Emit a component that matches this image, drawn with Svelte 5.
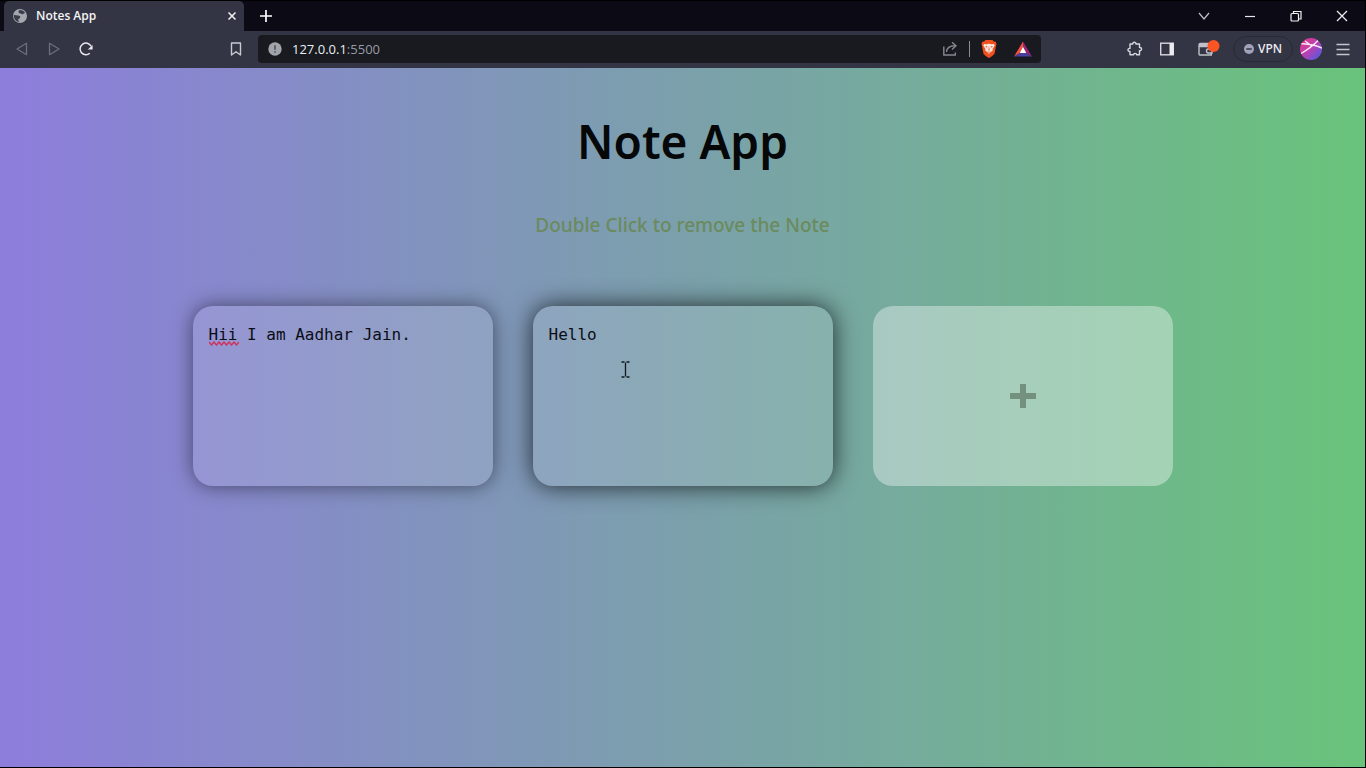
<script>
  let notes = $state([
    { id: 1, text: 'Hii I am Aadhar Jain.', active: false, misspelt: true },
    { id: 2, text: 'Hello', active: true, misspelt: false }
  ]);
  let nextId = 3;

  function addNote() {
    notes.push({ id: nextId++, text: '', active: false, misspelt: false });
  }

  function removeNote(id) {
    notes = notes.filter((note) => note.id !== id);
  }
</script>

<div class="window">
  <header class="titlebar">
    <div class="tab">
      <svg class="globe" width="16" height="16" viewBox="0 0 16 16" aria-hidden="true">
        <circle cx="8" cy="8" r="7" fill="#a6a8b0" />
        <path d="M1.800 7.200C3.500 6.600 4.600 7.800 6.200 7.600c1.800 0 2.600 1 1.800 2.400-.6.800-1.800.6-1.800 1.800 0 .8.800 1.200.6 2.200C3.800 13.500 1.600 10.600 1.800 7.200zM7.500 2c2.200-.2 4.600.800 5.600 3-1.200 0-1.400 1.200-2.600 1.200-1 0-1.200-.8-2-.8-1.200 0-2-.6-2-1.600C6.500 3 7 2.600 7.500 2z" fill="#3b3d49" />
      </svg>
      <span class="tab-title">Notes App</span>
      <button class="plain close" aria-label="Close tab">
        <svg width="10" height="10" viewBox="0 0 10 10"><path d="M1.500 1.500l7 7m0-7l-7 7" stroke="#f0f0f3" stroke-width="1.500" /></svg>
      </button>
    </div>
    <button class="plain new-tab" aria-label="New tab">
      <svg width="14" height="14" viewBox="0 0 14 14"><path d="M7 1v12M1 7h12" stroke="#fff" stroke-width="1.700" /></svg>
    </button>
    <div class="controls">
      <button class="plain control" aria-label="Search tabs">
        <svg width="12" height="12" viewBox="0 0 12 12"><path d="M1 3l5 6 5-6" fill="none" stroke="#c0c0c8" stroke-width="1.200" /></svg>
      </button>
      <button class="plain control" aria-label="Minimize">
        <svg width="12" height="12" viewBox="0 0 12 12"><path d="M1 6.500h10" stroke="#e8e8ec" stroke-width="1.200" /></svg>
      </button>
      <button class="plain control" aria-label="Restore">
        <svg width="12" height="12" viewBox="0 0 12 12" fill="none" stroke="#f0f0f3" stroke-width="1.200"><rect x="1" y="3.500" width="7.500" height="7.500" rx="1" /><path d="M3.500 3.500V1.500h7.500v7.500H8.500" /></svg>
      </button>
      <button class="plain control" aria-label="Close window">
        <svg width="12" height="12" viewBox="0 0 12 12"><path d="M1 1l10 10M11 1L1 11" stroke="#f0f0f3" stroke-width="1.200" /></svg>
      </button>
    </div>
  </header>

  <nav class="toolbar" aria-label="Browser toolbar">
    <div class="history">
      <button class="plain icon" aria-label="Back">
        <svg width="16" height="16" viewBox="0 0 16 16"><path d="M12.500 2.300v11.400L3 8z" fill="none" stroke="#6c6e7a" stroke-width="1.300" stroke-linejoin="round" /></svg>
      </button>
      <button class="plain icon" aria-label="Forward">
        <svg width="16" height="16" viewBox="0 0 16 16"><path d="M3.500 2.300v11.400L13 8z" fill="none" stroke="#6c6e7a" stroke-width="1.300" stroke-linejoin="round" /></svg>
      </button>
      <button class="plain icon" aria-label="Reload">
        <svg width="16" height="16" viewBox="0 0 16 16"><path d="M11.800 12.200A5.800 5.800 0 1 1 13 5.200" fill="none" stroke="#e8e8ec" stroke-width="1.500" /><path d="M14.600 4v4.500h-4.800z" fill="#e8e8ec" /></svg>
      </button>
    </div>
    <button class="plain icon bookmark" aria-label="Bookmark this page">
      <svg width="16" height="16" viewBox="0 0 16 16"><path d="M3.500 2h9v12L8 10.800 3.500 14z" fill="none" stroke="#c9cad1" stroke-width="1.400" stroke-linejoin="round" /></svg>
    </button>
    <div class="address">
      <svg width="14" height="14" viewBox="0 0 14 14" aria-hidden="true"><circle cx="7" cy="7" r="6.700" fill="#a2a4ab" /><path d="M7 3.200v4.600M7 9.200v1.600" stroke="#4b4d55" stroke-width="1.500" /></svg>
      <span class="url">127.0.0.1<span class="port">:5500</span></span>
      <button class="plain icon share" aria-label="Share">
        <svg width="16" height="16" viewBox="0 0 16 16" fill="none" stroke="#85878f" stroke-width="1.400"><path d="M1.800 5.500v8.500h11.500v-2.500M4.500 11c.2-4 3-6.200 8.500-6.200" /><path d="M10 1.200l4 3.600-4 3.700" /></svg>
      </button>
      <span class="divider"></span>
      <button class="plain icon shield" aria-label="Brave Shields">
        <svg width="18" height="18" viewBox="0 0 18 18"><path d="M5.500 0h7l1.300 1.500 1.900.2.900 2.600-.6 1.500-1.300 7.100c-.3 1.200-1.700 2.500-5.700 5.100-4-2.600-5.400-3.900-5.700-5.100L2 5.800l-.6-1.500.9-2.600 1.900-.2z" fill="#f0501f" /><path d="M4 4l2.700.3L9 3.700l2.300.6L14 4l.7 1.600-2.200 3.400.3 1.500-2 1.500L9 13.900 7.200 12l-2-1.500.3-1.500-2.200-3.400z" fill="#f7e6dc" /><path d="M5 6l2.500.5-.7 1.300zM13 6l-2.500.5.7 1.300zM9 6l.6 4L9 11l-.6-1zM7 11.200l2 .9 2-.9-2 1.700z" fill="#dc5430" /></svg>
      </button>
      <button class="plain icon" aria-label="Brave Rewards">
        <svg width="18" height="16" viewBox="0 0 18 16"><path d="M9 .500L0 15.500l6-3.500L9 6z" fill="#f4513b" /><path d="M9 .500l9 15L12 12 9 6z" fill="#9c2277" /><path d="M0 15.500h18L12 12H6z" fill="#493f9f" /><path d="M9 5.800L12.200 12H5.800z" fill="#fff" /></svg>
      </button>
    </div>
    <div class="extensions">
      <button class="plain icon" aria-label="Extensions">
        <svg width="16" height="16" viewBox="0 0 16 16"><path d="M3 3h2.800c-.5-2.300 3.600-2.300 3.100 0h3.600v3.500c2.700-.4 2.700 3.600 0 3.200v4.100H9.600c.2-1.900-3.200-1.900-3 0H3V10.500c-2.700.3-2.700-3.400 0-3.100z" fill="none" stroke="#d7d8de" stroke-width="1.400" stroke-linejoin="round" /></svg>
      </button>
      <button class="plain icon" aria-label="Sidebar">
        <svg width="16" height="16" viewBox="0 0 16 16"><rect x="1.700" y="2.200" width="12.600" height="11.600" fill="none" stroke="#d7d8de" stroke-width="1.400" /><path d="M10.500 2h4v12h-4z" fill="#ececf0" /></svg>
      </button>
      <button class="plain wallet" aria-label="Wallet">
        <svg width="24" height="18" viewBox="0 0 24 18"><path d="M2 5v9.300c0 .5.200.7.700.7h11.600V6.500H2M2 5c0-1 .4-1.500 1.500-1.500h9v3" fill="none" stroke="#bfc0c8" stroke-width="1.400" /><path d="M2 4h10v2H2z" fill="#bfc0c8" /><path d="M15 9h-4c-2 0-2 4 0 4h4z" fill="#343645" stroke="#bfc0c8" stroke-width="1.400" /><circle cx="16.500" cy="6" r="6" fill="#fc5422" /></svg>
      </button>
    </div>
    <button class="vpn">
      <svg width="10" height="10" viewBox="0 0 10 10" aria-hidden="true"><circle cx="5" cy="5" r="5" fill="#a0a3ba" /><path d="M2.300 5h5.400" stroke="#343645" stroke-width="1.500" /></svg>
      <span>VPN</span>
    </button>
    <button class="plain profile" aria-label="Profile">
      <svg width="22" height="22" viewBox="0 0 22 22">
        <defs>
          <linearGradient id="avatar" x1="0" y1="0" x2="1" y2="1"><stop offset=".1" stop-color="#e0398c" /><stop offset=".5" stop-color="#b83fb4" /><stop offset="1" stop-color="#3f62e8" /></linearGradient>
          <clipPath id="avatar-disc"><circle cx="11" cy="11" r="11" /></clipPath>
        </defs>
        <g clip-path="url(#avatar-disc)"><path d="M0 0h22v22H0z" fill="url(#avatar)" /><path d="M0 5.500c8 .2 16 2 22 4.500M1 15.500C7 12 13 8 18 2.500M5 3c3 2 5 3.500 7 5.500" fill="none" stroke="#fbeaf6" stroke-width="1.400" /></g>
      </svg>
    </button>
    <button class="plain icon menu" aria-label="Menu">
      <svg width="16" height="16" viewBox="0 0 16 16"><path d="M1.500 3.500h13M1.500 8.500h13M1.500 13.500h13" stroke="#c4c5cc" stroke-width="1.500" /></svg>
    </button>
  </nav>

  <main>
    <h1>Note App</h1>
    <p>Double Click to remove the Note</p>
    <div class="notes">
      {#each notes as note (note.id)}
        <div class="note" class:active={note.active}>
          <textarea
            aria-label="Note {note.id}"
            spellcheck="false"
            bind:value={note.text}
            ondblclick={() => removeNote(note.id)}
          ></textarea>
          {#if note.misspelt}
            <svg class="squiggle" width="30" height="5" viewBox="0 0 30 5" aria-hidden="true"><path d="M0 1l2.500 3L5 1l2.500 3L10 1l2.500 3L15 1l2.500 3L20 1l2.500 3L25 1l2.500 3L30 1" fill="none" stroke="#d52c55" stroke-width="1.300" /></svg>
          {/if}
          {#if note.active}
            <svg class="caret" width="9" height="17" viewBox="0 0 9 17" aria-hidden="true"><path d="M.500 1h3M5.500 1h3M.500 16h3M5.500 16h3M4.500 1.500v14" stroke="#10191d" stroke-width="1.300" /></svg>
          {/if}
        </div>
      {/each}
      <button class="add" aria-label="Add note" onclick={addNote}>
        <svg width="26" height="24" viewBox="0 0 26 24"><path d="M10 0h6v9h10v6H16v9h-6v-9H0V9h10z" fill="#74917f" /></svg>
      </button>
    </div>
  </main>
</div>

<style>
  :global(body) {
    margin: 0;
    background: #000;
  }

  .window {
    box-sizing: border-box;
    min-height: 100vh;
    display: flex;
    flex-direction: column;
    border-right: 1px solid #000;
    border-bottom: 1px solid #000;
    font-family: "Noto Sans", "Open Sans", sans-serif;
  }

  button {
    font: inherit;
    cursor: pointer;
  }

  .plain {
    display: flex;
    align-items: center;
    justify-content: center;
    padding: 0;
    border: 0;
    background: none;
  }

  svg {
    display: block;
    flex: none;
  }

  .titlebar {
    display: flex;
    height: 31px;
    box-sizing: border-box;
    border-top: 1px solid #000;
    padding-left: 4px;
    background: #0c0a15;
  }

  .tab {
    box-sizing: border-box;
    display: flex;
    align-items: center;
    width: 240px;
    padding: 0 6px 0 8px;
    border-radius: 5px 5px 0 0;
    background: #333544;
    color: #f4f4f6;
  }

  .tab-title {
    flex: 1;
    margin-left: 8px;
    font-family: "Open Sans", sans-serif;
    font-size: 12px;
    font-weight: 600;
    line-height: 16px;
  }

  .close {
    width: 12px;
    height: 16px;
  }

  .new-tab {
    width: 44px;
  }

  .controls {
    display: flex;
    margin-left: auto;
  }

  .control {
    width: 46px;
  }

  .toolbar {
    box-sizing: border-box;
    display: flex;
    align-items: center;
    height: 37px;
    padding: 0 14px 2px;
    background: #333544;
  }

  .history {
    display: flex;
    gap: 16px;
  }

  .icon {
    width: 16px;
    height: 24px;
  }

  .bookmark {
    margin-left: 134px;
  }

  .address {
    flex: 1;
    box-sizing: border-box;
    display: flex;
    align-items: center;
    height: 28px;
    margin-left: 14px;
    padding: 0 10px;
    border-radius: 4px;
    background: #181a20;
  }

  .url {
    margin-left: 10px;
    color: #eceef0;
    font-family: "Open Sans", sans-serif;
    font-size: 13px;
    line-height: 20px;
  }

  .port {
    color: #989ba2;
  }

  .share {
    margin-left: auto;
  }

  .divider {
    width: 1px;
    height: 16px;
    margin: 0 11px;
    background: #8b8d93;
  }

  .shield {
    margin-right: 18px;
  }

  .extensions {
    display: flex;
    align-items: center;
    gap: 16px;
    margin-left: 86px;
  }

  .wallet {
    margin-left: 6px;
  }

  .vpn {
    box-sizing: border-box;
    display: flex;
    align-items: center;
    gap: 4px;
    width: 60px;
    height: 26px;
    margin-left: 12px;
    padding: 0 10px;
    border: 1px solid #282a36;
    border-radius: 13px;
    background: none;
    color: #f0f0f4;
    font-size: 12px;
    font-weight: 500;
    line-height: 16px;
  }

  .profile {
    margin-left: 7px;
  }

  .menu {
    margin-left: 13px;
  }

  main {
    flex: 1;
    display: flex;
    flex-direction: column;
    align-items: center;
    padding: 41px 20px 40px;
    background: linear-gradient(to right, #8d7ddc, #69c37b);
  }

  h1 {
    margin: 0;
    color: #050708;
    font-size: 46px;
    font-weight: 600;
    line-height: 64px;
  }

  p {
    margin: 38px 0 0;
    color: #6b8a5d;
    font-size: 19px;
    font-weight: 500;
    line-height: 28px;
  }

  .notes {
    display: flex;
    flex-wrap: wrap;
    justify-content: center;
    gap: 40px;
    margin-top: 67px;
  }

  .note,
  .add {
    box-sizing: border-box;
    width: 300px;
    height: 180px;
    border-radius: 20px;
  }

  .note {
    position: relative;
    background: rgba(255, 255, 255, 0.12);
    box-shadow: 0 0 20px rgba(0, 0, 0, 0.5);
  }

  .note.active {
    box-shadow: 0 0 24px rgba(0, 0, 0, 0.75);
  }

  textarea {
    box-sizing: border-box;
    display: block;
    width: 100%;
    height: 100%;
    padding: 17px 16px;
    border: 0;
    border-radius: 20px;
    outline: none;
    resize: none;
    background: none;
    color: #0b0d16;
    font-family: "DejaVu Sans Mono", monospace;
    font-size: 16px;
    line-height: 24px;
  }

  .squiggle {
    position: absolute;
    top: 35px;
    left: 16px;
  }

  .caret {
    position: absolute;
    top: 55px;
    left: 88px;
  }

  .add {
    display: flex;
    align-items: center;
    justify-content: center;
    padding: 0;
    border: 0;
    background: rgba(255, 255, 255, 0.37);
  }
</style>
